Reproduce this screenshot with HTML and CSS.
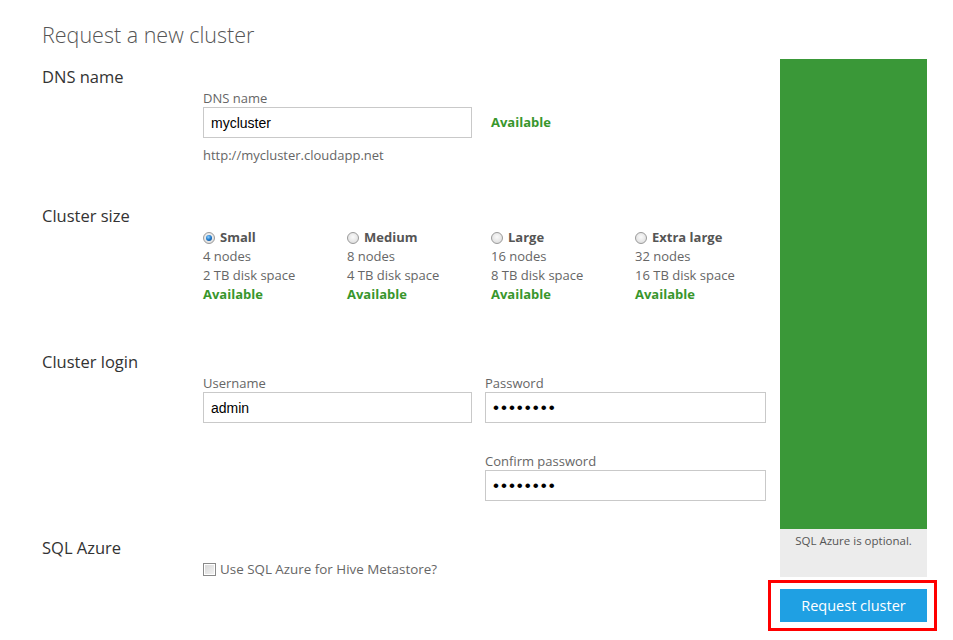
FILE: index.html
```html
<!DOCTYPE html>
<html>
<head>
<meta charset="utf-8">
<link rel="stylesheet" href="styles.css">
</head>
<body>
<div class="page">
  <div class="form">
    <h1 class="title">Request a new cluster</h1>

    <section class="sec sec-dns">
      <h2 class="sec-head">DNS name</h2>
      <div class="sec-body">
        <div class="lbl">DNS name</div>
        <div class="dns-row">
          <input class="field field-dns" type="text" value="mycluster" readonly>
          <span class="avail">Available</span>
        </div>
        <div class="url">http://mycluster.cloudapp.net</div>
      </div>
    </section>

    <section class="sec sec-size">
      <h2 class="sec-head">Cluster size</h2>
      <div class="sec-body sizes">
        <div class="size">
          <div class="opt"><span class="radio checked"></span><b>Small</b></div>
          <div class="line">4 nodes</div>
          <div class="line">2 TB disk space</div>
          <div class="avail">Available</div>
        </div>
        <div class="size">
          <div class="opt"><span class="radio"></span><b>Medium</b></div>
          <div class="line">8 nodes</div>
          <div class="line">4 TB disk space</div>
          <div class="avail">Available</div>
        </div>
        <div class="size">
          <div class="opt"><span class="radio"></span><b>Large</b></div>
          <div class="line">16 nodes</div>
          <div class="line">8 TB disk space</div>
          <div class="avail">Available</div>
        </div>
        <div class="size">
          <div class="opt"><span class="radio"></span><b>Extra large</b></div>
          <div class="line">32 nodes</div>
          <div class="line">16 TB disk space</div>
          <div class="avail">Available</div>
        </div>
      </div>
    </section>

    <section class="sec sec-login">
      <h2 class="sec-head">Cluster login</h2>
      <div class="sec-body login-grid">
        <div class="cell">
          <div class="lbl">Username</div>
          <input class="field" type="text" value="admin" readonly>
        </div>
        <div class="cell">
          <div class="lbl">Password</div>
          <input class="field pw" type="password" value="********" readonly>
        </div>
        <div class="cell"></div>
        <div class="cell confirm">
          <div class="lbl">Confirm password</div>
          <input class="field pw" type="password" value="********" readonly>
        </div>
      </div>
    </section>

    <section class="sec sec-sql">
      <h2 class="sec-head">SQL Azure</h2>
      <div class="sec-body">
        <div class="check-row"><span class="checkbox"></span>Use SQL Azure for Hive Metastore?</div>
      </div>
    </section>
  </div>

  <aside class="side">
    <div class="side-green"></div>
    <div class="side-note">SQL Azure is optional.</div>
    <div class="highlight">
      <button class="btn" type="button">Request cluster</button>
    </div>
  </aside>
</div>
</body>
</html>
```

FILE: styles.css
```css
* { box-sizing: border-box; }
html, body { margin: 0; padding: 0; background: #fff; }
body {
  font-family: "Open Sans", "Noto Sans", sans-serif;
  color: #555;
  font-size: 13px;
}
.page {
  display: flex;
  width: 953px;
  height: 640px;
  padding-left: 42px;
}
.form {
  width: 738px;
  padding-top: 20px;
}
.title {
  margin: 0;
  font-weight: 300;
  font-size: 21.5px;
  line-height: 30px;
  color: #555;
}
.sec-head {
  margin: 0;
  font-weight: 400;
  font-size: 16.5px;
  line-height: 24px;
  color: #333;
}
.sec-body { margin-left: 161px; }
.sec-dns { margin-top: 15px; }
.lbl { line-height: 18px; height: 18px; color: #666; }
.dns-row { display: flex; align-items: center; gap: 19px; }
.field {
  display: block;
  width: 269px;
  height: 31px;
  border: 1px solid #c9c9c9;
  padding: 0 0 0 7px;
  font-family: "Liberation Sans", Arial, sans-serif;
  font-size: 14px;
  color: #000;
  background: #fff;
  outline: none;
}
.pw { font-size: 17px; letter-spacing: 2px; }
.avail {
  color: #38962c;
  font-weight: 700;
  line-height: 19px;
}
.url { margin-top: 8px; line-height: 18px; color: #666; }

.sec-size { margin-top: 40px; }
.sizes { display: grid; grid-template-columns: repeat(4, 144px); }
.size .opt, .size .line { line-height: 19px; color: #666; }
.size .opt { display: flex; align-items: center; color: #555; }
.size .opt b { font-weight: 700; }
.radio {
  width: 12px; height: 12px;
  border-radius: 50%;
  margin-right: 5px;
  border: 1px solid #9a9a9a;
  background: radial-gradient(circle at 50% 40%, #fafafa 0%, #e2e2e2 70%, #d0d0d0 100%);
  position: relative;
  flex: none;
}
.radio.checked::after {
  content: "";
  position: absolute;
  left: 2px; top: 2px;
  width: 6px; height: 6px;
  border-radius: 50%;
  background: radial-gradient(circle at 40% 35%, #8fd0ff 0%, #1e78c8 50%, #0b3f80 100%);
}

.sec-login { margin-top: 46px; }
.login-grid {
  display: grid;
  grid-template-columns: 269px 281px;
  column-gap: 13px;
}
.login-grid .cell:nth-child(2) .field, .confirm .field { width: 281px; }
.confirm { margin-top: 29px; }

.sec-sql { margin-top: 35px; }
.check-row { display: flex; align-items: center; line-height: 18px; margin-top: 0; color: #666; font-size: 13.4px; }
.checkbox {
  width: 13px; height: 13px;
  border: 1px solid #8a8a8a;
  margin-right: 4px;
  background: linear-gradient(135deg, #d6d6d6, #f4f4f4);
  box-shadow: inset 0 0 0 1px #fff;
  flex: none;
}

.side {
  width: 147px;
  display: flex;
  flex-direction: column;
}
.side-green {
  margin-top: 59px;
  height: 470px;
  background: #3a9838;
}
.side-note {
  height: 48px;
  background: #ececec;
  text-align: center;
  font-size: 11.5px;
  color: #555;
  line-height: 24px;
}
.highlight {
  margin: 3px -10px 0 -12px;
  border: 3px solid #ff0000;
  padding: 6px 7px 6px 9px;
}
.btn {
  display: block;
  width: 147px;
  height: 33px;
  border: 0;
  background: #1fa0e3;
  color: #fff;
  font-family: "Open Sans", "Noto Sans", sans-serif;
  font-size: 14.5px;
  padding: 0;
}
```
